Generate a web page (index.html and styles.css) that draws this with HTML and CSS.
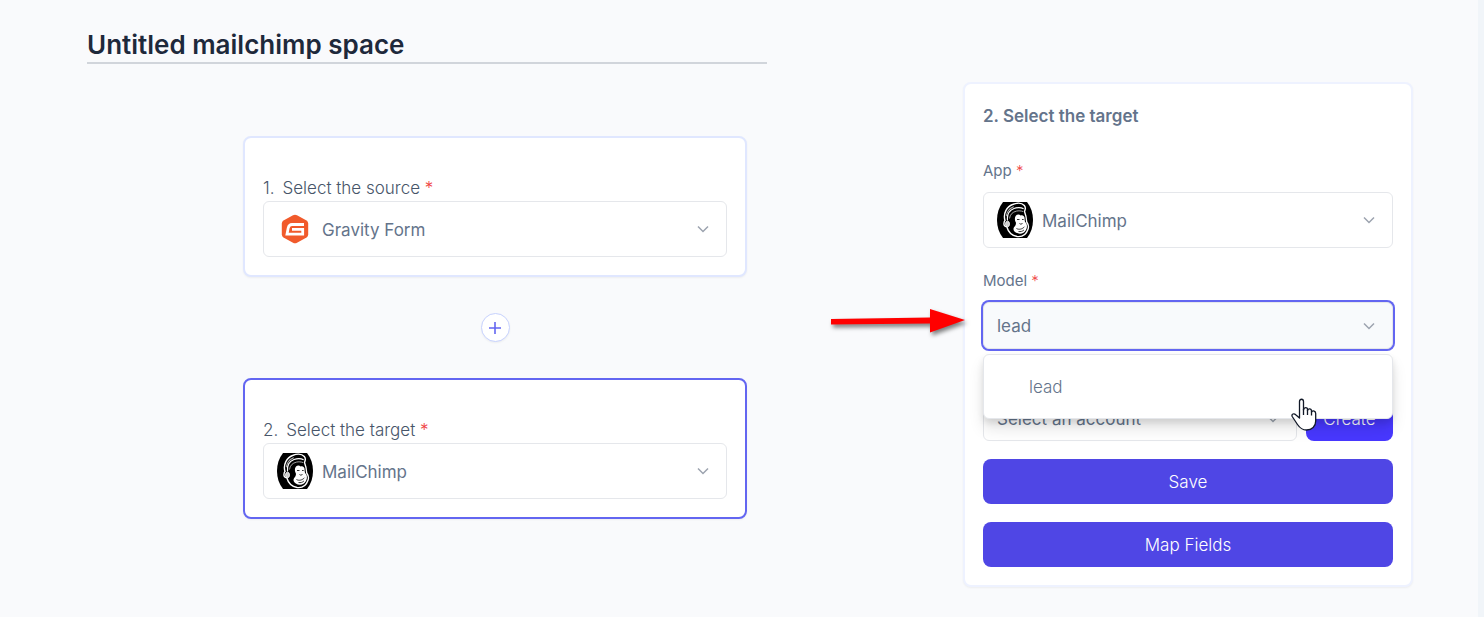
FILE: index.html
```html
<!DOCTYPE html>
<html lang="en">
<head>
<meta charset="utf-8">
<meta name="viewport" content="width=device-width, initial-scale=1">
<title>Untitled mailchimp space</title>
<link rel="stylesheet" href="styles.css">
</head>
<body>
<svg class="sprite" aria-hidden="true">
  <symbol id="chevron" viewBox="0 0 12 8"><path d="M1 1.500l5 5 5-5" fill="none" stroke="#9ca3af" stroke-width="1.500"/></symbol>
  <symbol id="gravity" viewBox="0 0 27 30">
    <path d="M11.500 1.200q2-1.100 4 0l9.500 5.400q1.700 1 1.700 3v10.800q0 2-1.700 3l-9.500 5.400q-2 1.100-4 0L2 23.400q-1.700-1-1.700-3V9.600q0-2 1.700-3z" fill="#f15a2b"/>
    <path d="M22.500 10.500H10.500Q7.600 10.500 6.700 14L5.500 20.200H21.200V15.300H10.500" fill="none" stroke="#fff" stroke-width="2.800"/>
  </symbol>
  <symbol id="mailchimp" viewBox="0 0 36 36">
    <path d="M6 0h24c4 5 6 11 6 18s-2 13-6 18H6c-4-5-6-11-6-18S2 5 6 0z" fill="#000"/>
    <path d="M8 18.500C5.800 11.500 10 4.500 15.500 2.500c5-2 9.500-1.500 11.800 1 1.300 1.500 1.200 3.800.2 6 1.400 3.500 2 6.800 2.200 10.500 2 2.800 2.300 5 1.200 7.500-1.500 4.500-5.200 7.600-10.800 7-5-.7-8.700-4-10.300-9.700C7.500 24.500 6.700 23 7 21q.2-2 1-2.500z" fill="#000" stroke="#fff" stroke-width="1.400"/>
    <path d="M10.500 18.500C9.800 12.500 12 8.500 17 6.500c3.200-1.200 6.800-1.200 9.600.2" fill="none" stroke="#fff" stroke-width="1.200"/>
    <path d="M8.800 14C10 8.500 12.500 5.500 17 4l-.5 1.500c-4 1.500-6.300 4.500-6.800 9z" fill="#aaa"/>
    <path d="M12.500 16.500c.5-4 3-6.500 7-7.400 2.200-.5 4.500-.3 6.700.5" fill="none" stroke="#ccc" stroke-width=".8"/>
    <ellipse cx="10.500" cy="22" rx="2" ry="2.800" fill="#ccc" stroke="#fff" stroke-width=".8"/>
    <path d="M19 13.500c1.500-1.500 3.500-1.300 4.700.1 1.500-1 3.500 0 3.800 2 .2 1.800.1 3 .6 4.400 2 1.600 2.500 4.500 1 7.800-2 4.200-6.800 4.800-10.300 2.700-2.400-1.500-2.900-3.800-1.700-5.600 1.500-1.300 2-2.800 1.800-4.400-1.300-2-1.500-5.100.1-7z" fill="#fff"/>
    <path d="M20 17.500h2.500M25 17.500h1.700M22.500 21.500l1.300.7 1.700-.7M19.500 26.500c2.500 1.500 6 .6 8-1.800M21.500 29.500c2 .4 4-.1 5.400-1.500" fill="none" stroke="#333" stroke-width="1"/>
  </symbol>
</svg>

<div class="page">
  <main class="flow">
    <input class="title" type="text" value="Untitled mailchimp space" aria-label="Space name">

    <div class="steps">
      <section class="card">
        <label class="card-label" for="source"><span>1.</span><span>Select the source <b class="req">*</b></span></label>
        <div class="field">
          <svg class="brand gravity"><use href="#gravity"/></svg>
          <select id="source" class="control with-icon"><option>Gravity Form</option></select>
          <svg class="chevron"><use href="#chevron"/></svg>
        </div>
      </section>

      <button class="add" type="button" aria-label="Add step">
        <svg viewBox="0 0 12 12"><path d="M6 0v12M0 6h12" stroke="#6366f1" stroke-width="1.600"/></svg>
      </button>

      <section class="card active">
        <label class="card-label" for="target"><span>2.</span><span>Select the target <b class="req">*</b></span></label>
        <div class="field">
          <svg class="brand"><use href="#mailchimp"/></svg>
          <select id="target" class="control with-icon"><option>MailChimp</option></select>
          <svg class="chevron"><use href="#chevron"/></svg>
        </div>
      </section>
    </div>
  </main>

  <aside class="panel">
    <h2>2. Select the target</h2>

    <label class="label" for="app">App <b class="req">*</b></label>
    <div class="field">
      <svg class="brand"><use href="#mailchimp"/></svg>
      <select id="app" class="control with-icon"><option>MailChimp</option></select>
      <svg class="chevron"><use href="#chevron"/></svg>
    </div>

    <label class="label model-label" for="model">Model <b class="req">*</b></label>
    <div class="field">
      <select id="model" class="control short open"><option>lead</option></select>
      <svg class="chevron"><use href="#chevron"/></svg>
      <div class="menu" role="listbox" aria-label="Model">
        <div class="option" role="option" aria-selected="true">lead</div>
        <svg class="cursor" viewBox="0 0 26 33" aria-hidden="true">
          <path d="M8.500 20V3.500C8.500 .5 12.500 .5 12.500 3.500V12C13 8.800 16.500 9 16.500 11.500V12.500C17.500 10 20.500 10.700 20.500 13V14C22 12 24.700 13 24.700 15.500V23C24.700 28.500 21 32 15.500 32C11 32 8.500 29.500 6.500 26.500L1.200 18.500C.2 16 3 15 4.700 16.700Z" fill="#fff" stroke="#111827" stroke-width="1.300" stroke-linejoin="round"/>
          <path d="M12.500 11v6M16.500 12v5M20.500 13.500v4" stroke="#111827" stroke-width="1.300"/>
        </svg>
      </div>
      <svg class="pointer" viewBox="0 0 140 32" aria-hidden="true">
        <path d="M2 10L101 8.500V0L136 11 101 23.500V14.500L2 15.500z" fill="#f00"/>
      </svg>
    </div>

    <div class="account">
      <div class="field">
        <select class="control short" aria-label="Account"><option>Select an account</option></select>
        <svg class="chevron"><use href="#chevron"/></svg>
      </div>
      <button class="btn create" type="button">Create</button>
    </div>

    <button class="btn" type="button">Save</button>
    <button class="btn" type="button">Map Fields</button>
  </aside>
</div>
</body>
</html>
```

FILE: styles.css
```css
* { box-sizing: border-box; }

body {
  margin: 0;
  background: #f9fafc;
  color: #64748b;
  font-family: Inter, "Liberation Sans", sans-serif;
  font-size: 17px;
  line-height: 24px;
}

button, input, select { font: inherit; color: inherit; }

.sprite { position: absolute; width: 0; height: 0; }

.page {
  min-height: 100vh;
  display: grid;
  grid-template-columns: minmax(0, 680fr) minmax(0, 450fr);
  column-gap: 196px;
  align-items: start;
  padding: 26px 65px 26px 87px;
  border-right: 6px solid #f1f5f9;
}

.title {
  display: block;
  width: 100%;
  height: 38px;
  padding: 0;
  border: 0;
  border-bottom: 2px solid #d1d5db;
  background: none;
  color: #1e293b;
  font-size: 26px;
  font-weight: 600;
  outline: none;
}

.steps {
  display: flex;
  flex-direction: column;
  align-items: center;
  gap: 36px;
  padding: 72px 20px 0 156px;
}

.card {
  width: 100%;
  padding: 38px 18px 18px;
  background: #fff;
  border: 2px solid #e0e7ff;
  border-radius: 8px;
  box-shadow: 0 1px 2px #0000000d;
}

.card.active { border-color: #6366f1; }

.card-label {
  display: flex;
  gap: 8px;
  padding-bottom: 1px;
  color: #475569;
  font-weight: 300;
}

.req { color: #ef4444; font-weight: 300; }

.field { position: relative; }

.control {
  display: block;
  width: 100%;
  height: 56px;
  padding: 0 40px 0 13px;
  appearance: none;
  background: #fff;
  border: 1px solid #e5e7eb;
  border-radius: 6px;
  outline: none;
}

.with-icon { padding: 2px 40px 0 58px; }

.short { height: 45px; }

.open {
  height: 47px;
  background: #f8fafc;
  box-shadow: 0 0 0 2px #6366f1;
}

.brand {
  position: absolute;
  top: 10px;
  left: 14px;
  width: 36px;
  height: 36px;
}

.gravity { top: 13px; height: 30px; }

.chevron {
  position: absolute;
  top: calc(50% - 4px);
  right: 18px;
  width: 12px;
  height: 8px;
}

.add {
  display: grid;
  place-items: center;
  width: 29px;
  height: 29px;
  padding: 0;
  background: #fff;
  border: 1px solid #c7d2fe;
  border-radius: 50%;
  box-shadow: 0 1px 2px #0000000d;
}

.add svg { width: 12px; height: 12px; }

.panel {
  margin-top: 56px;
  padding: 20px 18px 18px;
  background: #fff;
  border: 2px solid #eef2ff;
  border-radius: 8px;
  box-shadow: 0 1px 2px #0000000d;
}

h2 {
  margin: 0;
  font-size: 17px;
  line-height: 24px;
  font-weight: 600;
}

.label {
  display: block;
  padding: 31px 0 9px;
  font-size: 15px;
}

.model-label { padding-top: 21px; }

.menu {
  position: absolute;
  z-index: 2;
  top: 52px;
  left: 0;
  right: 0;
  padding: 20px 45px 19px;
  background: #fff;
  border: 1px solid #e5e7eb;
  border-radius: 6px;
  box-shadow: 0 10px 15px #0000001a, 0 4px 6px #0000001a;
  font-weight: 300;
}

.cursor {
  position: absolute;
  top: 43px;
  right: 75px;
  width: 26px;
  height: 33px;
}

.pointer {
  position: absolute;
  z-index: 3;
  top: 7px;
  left: -154px;
  width: 140px;
  height: 32px;
  filter: drop-shadow(2px 3px 2px #00000080);
}

.account {
  display: grid;
  grid-template-columns: minmax(0, 1fr) 87px;
  gap: 9px;
  margin-top: 47px;
}

.btn {
  display: block;
  width: 100%;
  height: 45px;
  margin-top: 18px;
  padding: 0;
  background: #4f46e5;
  border: 0;
  border-radius: 8px;
  color: #fff;
  font-weight: 300;
}

.create { margin-top: 0; background: #4838ff; }
```
